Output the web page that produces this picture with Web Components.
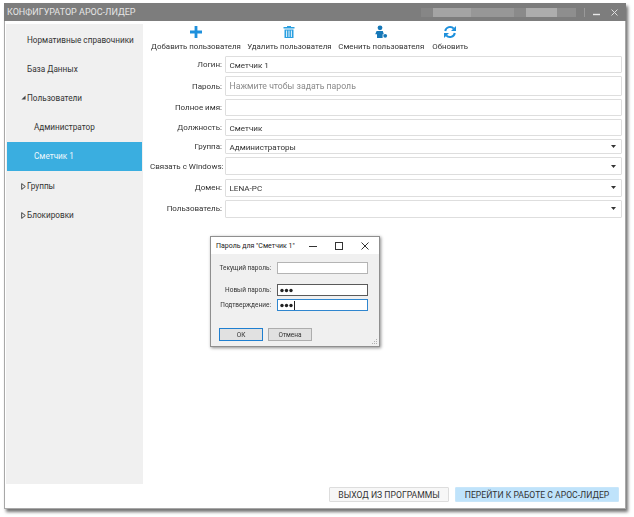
<!DOCTYPE html>
<html>
<head>
<meta charset="utf-8">
<style>
  html, body { margin: 0; padding: 0; background: #fff; }
  body { width: 634px; height: 517px; overflow: hidden; font: 8.2px Roboto, "Open Sans", sans-serif; color: #333; }
</style>
</head>
<body>
<app-window>
  <side-nav slot="nav">
    <nav-item indent="27">Нормативные справочники</nav-item>
    <nav-item indent="27">База Данных</nav-item>
    <nav-item indent="27" arrow="open">Пользователи</nav-item>
    <nav-item indent="34">Администратор</nav-item>
    <nav-item indent="34" selected>Сметчик 1</nav-item>
    <nav-item indent="27" arrow="closed">Группы</nav-item>
    <nav-item indent="27" arrow="closed">Блокировки</nav-item>
  </side-nav>
  <tool-bar slot="tools">
    <tool-button w="90" icon="plus">Добавить пользователя</tool-button>
    <tool-button w="84" icon="trash">Удалить пользователя</tool-button>
    <tool-button w="87" icon="user">Сменить пользователя</tool-button>
    <tool-button w="38" icon="refresh">Обновить</tool-button>
  </tool-bar>
  <user-form slot="form">
    <form-row h="17" label="Логин:" value="Сметчик 1"></form-row>
    <form-row h="20" label="Пароль:" value="Нажмите чтобы задать пароль" hint></form-row>
    <form-row h="17" label="Полное имя:"></form-row>
    <form-row h="17" label="Должность:" value="Сметчик"></form-row>
    <form-row h="15" label="Группа:" value="Администраторы" drop></form-row>
    <form-row h="18" label="Связать с Windows:" drop></form-row>
    <form-row h="18" label="Домен:" value="LENA-PC" drop></form-row>
    <form-row h="18" label="Пользователь:" drop></form-row>
  </user-form>
  <password-dialog slot="dialog"></password-dialog>
  <footer-button slot="footer" w="120">ВЫХОД ИЗ ПРОГРАММЫ</footer-button>
  <footer-button slot="footer" w="164" primary>ПЕРЕЙТИ К РАБОТЕ С АРОС-ЛИДЕР</footer-button>
</app-window>

<script>
const icons = {
  plus: `<svg width="14" height="14" viewBox="0 0 14 14"><path d="M5.6 1h2.8v4.6H13v2.8H8.4V13H5.6V8.4H1V5.6h4.6z" fill="#1e90dc"/></svg>`,
  trash: `<svg width="14" height="14" viewBox="0 0 14 14"><path d="M5 2V1h4v1h3.5v1.5h-11V2z" fill="#2a9fe0"/><path d="M2.5 4.5h9V13h-9z" fill="#2a9fe0"/><path d="M4.6 5.5v6.5M7 5.5v6.5M9.4 5.5v6.5" stroke="#fff" stroke-width=".9"/></svg>`,
  user: `<svg width="14" height="14" viewBox="0 0 14 14"><circle cx="6" cy="2.8" r="2.4" fill="#1678b8"/><path d="M2.6 6h6.2l1 3.2H8.6V13H3V9.2H1.2z" fill="#1678b8"/><circle cx="11.2" cy="10.8" r="1.9" fill="#1678b8"/></svg>`,
  refresh: `<svg width="14" height="14" viewBox="0 0 14 14" fill="none"><path d="M2.2 6A5 5 0 0 1 10.8 3.6" stroke="#1e90dc" stroke-width="2"/><path d="M13 1v5H8z" fill="#1e90dc"/><path d="M11.8 8A5 5 0 0 1 3.2 10.4" stroke="#1e90dc" stroke-width="2"/><path d="M1 13V8h5z" fill="#1e90dc"/></svg>`
};

function shadow(el, html) {
  const t = document.createElement('template');
  t.innerHTML = html;
  el.attachShadow({ mode: 'open' }).append(t.content.cloneNode(true));
}

class AppWindow extends HTMLElement {
  constructor() {
    super();
    shadow(this, `
      <style>
        :host { display: block; position: relative; box-sizing: border-box; width: 622px; height: 506px; margin: 3px 0 0 4px;
          background: #fff; border: 1px solid #a8a8a8; border-top: 0; box-shadow: 2px 3px 3px rgba(0,0,0,.55); filter: blur(.3px); }
        .title { display: flex; align-items: center; height: 18px; padding: 0 6px 0 3px; background: #7d7d7d; color: #e6e6e6; font-size: 9px; margin: 0 -1px; }
        .title span { flex: 1; }
        .blur { width: 155px; height: 9px; margin-right: 8px; background: linear-gradient(90deg,#868686 0 8%,#a4a4a4 8% 32%,#979797 32% 60%,#8a8a8a 60% 68%,#adadad 68% 88%,#8e8e8e 88%); }
        .sep { width: 1px; height: 9px; background: #999; margin-right: 8px; }
        .win { display: flex; gap: 11px; align-items: center; margin-right: 2px; }
        .main { display: grid; grid-template-columns: 137px 1fr; height: 460px; margin: 3px 0 0 1px; }
        .nav { background: #f0f0f0; }
        .content { padding: 0 3px 0 7px; }
        .foot { display: flex; justify-content: flex-end; gap: 6px; padding: 3px 6px 0 0; }
      </style>
      <div class="title"><span>КОНФИГУРАТОР АРОС-ЛИДЕР</span><i class="blur"></i><i class="sep"></i>
        <div class="win">
          <svg width="7" height="7" viewBox="0 0 7 7"><path d="M0 5.5h7" stroke="#e8e8e8" stroke-width="1.4"/></svg>
          <svg width="7" height="7" viewBox="0 0 7 7"><path d="M.5.5l6 6M6.5.5l-6 6" stroke="#ddd" stroke-width="1"/></svg>
        </div>
      </div>
      <div class="main">
        <div class="nav"><slot name="nav"></slot></div>
        <div class="content"><slot name="tools"></slot><slot name="form"></slot></div>
      </div>
      <div class="foot"><slot name="footer"></slot></div>
      <slot name="dialog"></slot>
    `);
  }
}

class SideNav extends HTMLElement {
  constructor() {
    super();
    shadow(this, `<style>:host { display: block; padding-top: 1px; }</style><slot></slot>`);
  }
}

class NavItem extends HTMLElement {
  constructor() {
    super();
    const arrow = this.getAttribute('arrow');
    let mark = '';
    if (arrow === 'open') mark = '<svg class="m" width="5" height="5" viewBox="0 0 6 6"><path d="M5.5.5v5H.5z" fill="#444"/></svg>';
    if (arrow === 'closed') mark = '<svg class="m" width="5" height="7" viewBox="0 0 5 7"><path d="M.7.6l3.6 2.9-3.6 2.9z" fill="#f4f4f4" stroke="#444"/></svg>';
    shadow(this, `
      <style>
        :host { display: flex; align-items: center; position: relative; height: 29.2px; padding-left: ${this.getAttribute('indent') - 6}px; color: #333; white-space: nowrap; }
        :host([selected]) { background: #3aaee0; color: #eef8fd; margin: 0 1px; padding-left: ${this.getAttribute('indent') - 7}px; }
        .m { position: absolute; left: 15px; top: 12px; }
      </style>${mark}<slot></slot>`);
  }
}

class ToolBar extends HTMLElement {
  constructor() {
    super();
    shadow(this, `<style>:host { display: flex; gap: 6.4px; height: 31px; padding: 1px 0 0 1px; }</style><slot></slot>`);
  }
}

class ToolButton extends HTMLElement {
  constructor() {
    super();
    shadow(this, `
      <style>
        :host { display: flex; flex-direction: column; align-items: center; width: ${this.getAttribute('w')}px; font-size: 7.9px; color: #333; white-space: nowrap; }
        svg { display: block; }
        .t { margin-top: 1px; line-height: 13px; }
      </style>${icons[this.getAttribute('icon')]}<div class="t"><slot></slot></div>`);
  }
}

class UserForm extends HTMLElement {
  constructor() {
    super();
    shadow(this, `<style>:host { display: flex; flex-direction: column; gap: 3.1px; }</style><slot></slot>`);
  }
}

class FormRow extends HTMLElement {
  constructor() {
    super();
    const value = this.getAttribute('value') || '';
    const hint = this.hasAttribute('hint');
    const drop = this.hasAttribute('drop');
    shadow(this, `
      <style>
        :host { display: grid; grid-template-columns: 72px 1fr; gap: 3px; height: ${this.getAttribute('h')}px; align-items: center; }
        .l { text-align: right; white-space: nowrap; color: #333; font-size: 8px; }
        .f { box-sizing: border-box; height: 100%; display: flex; align-items: center; justify-content: space-between; padding: 0 3.5px; border: 1px solid #dedede; border-radius: 1px; background: #fff; color: ${hint ? '#8a8a8a' : '#333'}; font-size: ${hint ? '8.7px' : '8.1px'}; }
        svg { display: block; margin-right: 2px; }
      </style>
      <div class="l">${this.getAttribute('label')}</div>
      <div class="f"><span>${value}</span>${drop ? '<svg width="5" height="3" viewBox="0 0 5 3"><path d="M0 0h5L2.5 3z" fill="#333"/></svg>' : ''}</div>`);
  }
}

class FooterButton extends HTMLElement {
  constructor() {
    super();
    shadow(this, `
      <style>
        :host { box-sizing: border-box; display: flex; align-items: center; justify-content: center; width: ${this.getAttribute('w')}px; height: 15px; font-size: 8.65px; white-space: nowrap; color: #333; background: #f7f7f7; border: 1px solid #ddd; border-radius: 1px; }
        :host([primary]) { background: #bfe3fb; border-color: #c8e6fa; }
      </style><slot></slot>`);
  }
}

class PasswordDialog extends HTMLElement {
  constructor() {
    super();
    const dots = '<svg width="13" height="5" viewBox="0 0 13 5" fill="#222"><circle cx="2" cy="2.5" r="1.7"/><circle cx="6.5" cy="2.5" r="1.7"/><circle cx="11" cy="2.5" r="1.7"/></svg>';
    shadow(this, `
      <style>
        :host { position: absolute; left: 205px; top: 233px; box-sizing: border-box; width: 170px; height: 111px; display: block; background: #f0f0f0; border: 1px solid #8f8f8f; box-shadow: 1px 1px 3px rgba(0,0,0,.45); font-size: 6.5px; color: #333; }
        .head { display: flex; align-items: center; height: 17px; padding: 0 10px 0 5px; background: #fff; font-size: 7px; color: #222; }
        .head span { flex: 1; white-space: nowrap; }
        .ctl { display: flex; gap: 18px; align-items: center; }
        .body { padding: 8px 10px 0 0; }
        .r { display: grid; grid-template-columns: 60px 91px; column-gap: 6px; align-items: center; height: 12px; }
        .r label { text-align: right; white-space: nowrap; }
        .i { box-sizing: border-box; height: 12px; border: 1px solid #b4b4b4; background: #fff; display: flex; align-items: center; padding-left: 2px; }
        .dark { border-color: #5a5a5a; }
        .focus { border-color: #2f86cf; }
        .caret { width: 1px; height: 9px; background: #222; margin-left: 1px; }
        .btns { display: flex; gap: 5px; padding: 17px 0 0 8px; }
        .b { box-sizing: border-box; width: 44px; height: 13px; display: flex; align-items: center; justify-content: center; background: #e1e1e1; border: 1px solid #adadad; }
        .b.def { border: 1.5px solid #1f7fd0; }
        .grip { position: absolute; right: 1px; bottom: 1px; }
      </style>
      <div class="head"><span>Пароль для "Сметчик 1"</span>
        <div class="ctl">
          <svg width="8" height="8" viewBox="0 0 8 8"><path d="M0 4.5h8" stroke="#333"/></svg>
          <svg width="8" height="8" viewBox="0 0 8 8"><rect x=".5" y=".5" width="7" height="7" fill="none" stroke="#333"/></svg>
          <svg width="8" height="8" viewBox="0 0 8 8"><path d="M.5.5l7 7M7.5.5l-7 7" stroke="#333" fill="none"/></svg>
        </div>
      </div>
      <div class="body">
        <div class="r"><label>Текущий пароль:</label><div class="i"></div></div>
        <div class="r" style="margin-top:10px"><label>Новый пароль:</label><div class="i dark">${dots}</div></div>
        <div class="r" style="margin-top:3px"><label>Подтверждение:</label><div class="i focus">${dots}<i class="caret"></i></div></div>
      </div>
      <div class="btns"><div class="b def">ОК</div><div class="b">Отмена</div></div>
      <svg class="grip" width="6" height="6" viewBox="0 0 6 6" fill="#b0b0b0"><rect x="4" y="0" width="1" height="1"/><rect x="2" y="2" width="1" height="1"/><rect x="4" y="2" width="1" height="1"/><rect x="0" y="4" width="1" height="1"/><rect x="2" y="4" width="1" height="1"/><rect x="4" y="4" width="1" height="1"/></svg>
    `);
  }
}

customElements.define('app-window', AppWindow);
customElements.define('side-nav', SideNav);
customElements.define('nav-item', NavItem);
customElements.define('tool-bar', ToolBar);
customElements.define('tool-button', ToolButton);
customElements.define('user-form', UserForm);
customElements.define('form-row', FormRow);
customElements.define('footer-button', FooterButton);
customElements.define('password-dialog', PasswordDialog);
</script>
</body>
</html>
